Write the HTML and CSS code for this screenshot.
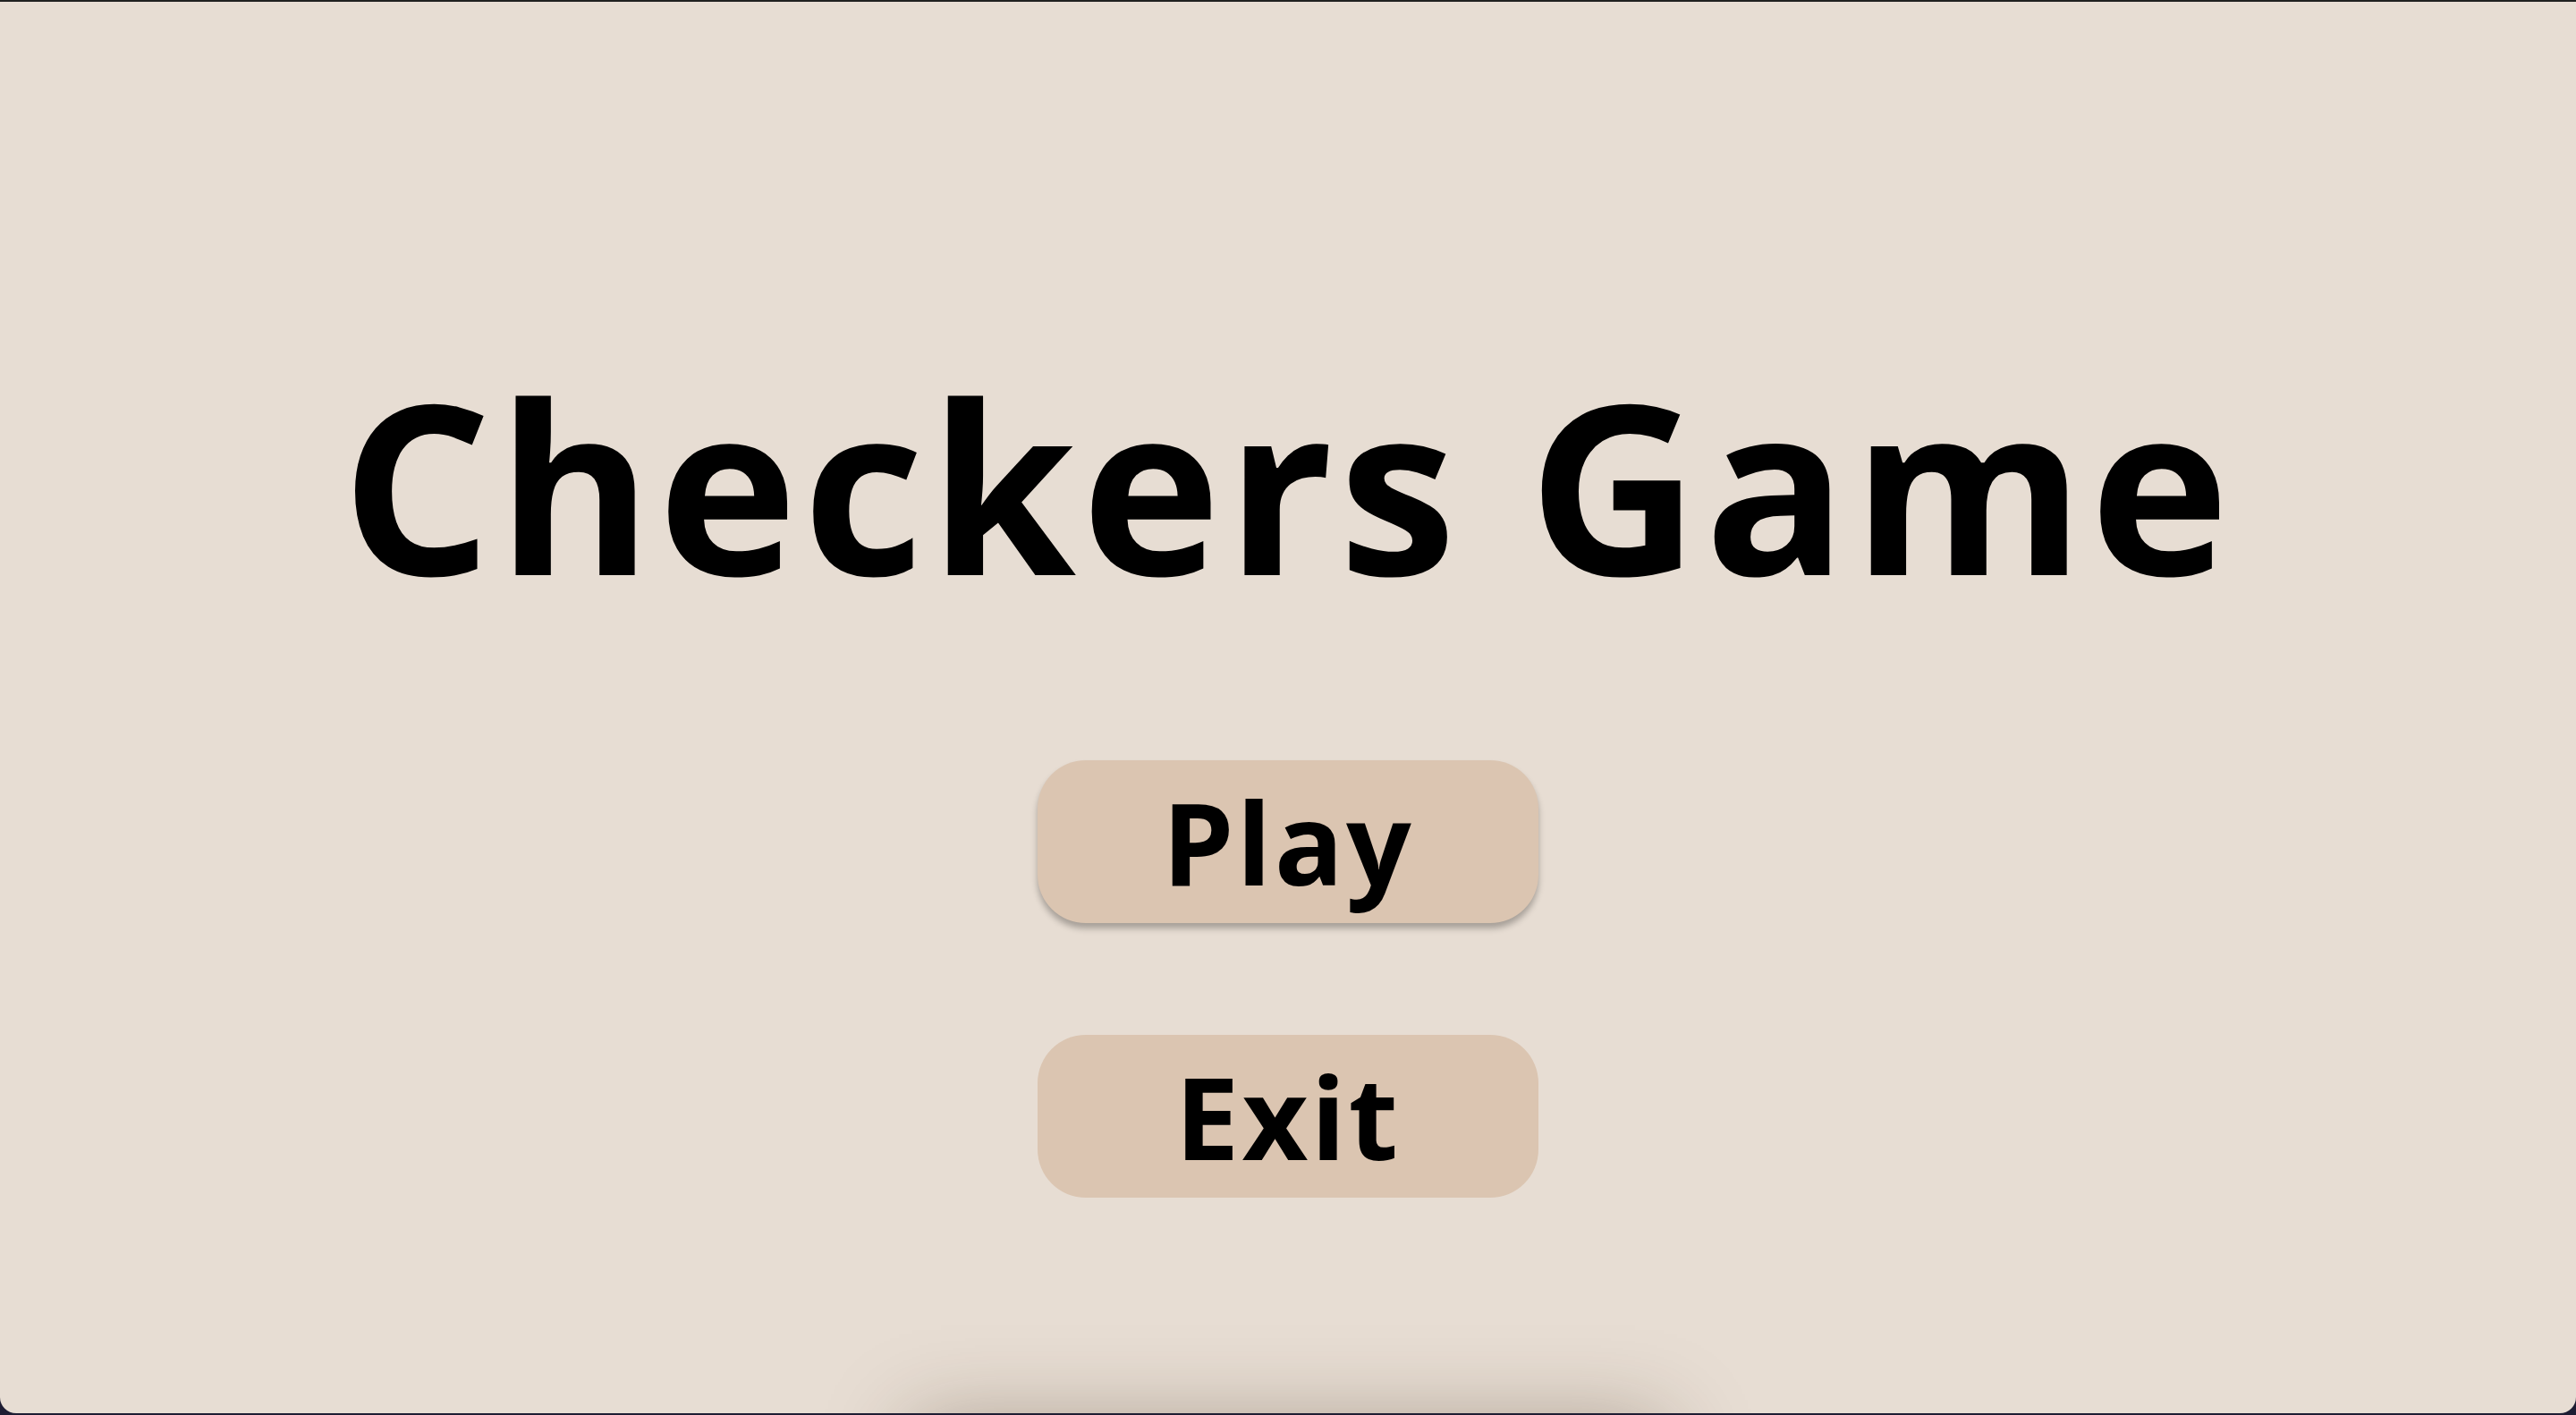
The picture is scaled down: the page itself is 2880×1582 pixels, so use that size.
FILE: index.html
```html
<!DOCTYPE html>
<html lang="en">
<head>
<meta charset="utf-8">
<title>Checkers Game</title>
<link rel="stylesheet" href="styles.css">
</head>
<body>
<main class="screen">
  <h1 class="title">Checkers Game</h1>
  <button class="btn btn-play">Play</button>
  <button class="btn btn-exit">Exit</button>
  <div class="board"></div>
</main>
</body>
</html>
```

FILE: styles.css
```css
html, body {
  margin: 0;
  padding: 0;
}
body {
  background: #1e1d33;
  border-top: 2px solid #202020;
  height: 1580px;
  overflow: hidden;
}
.screen {
  box-sizing: border-box;
  height: 1578px;
  background: #e7ddd3;
  border-radius: 0 0 18px 18px;
  overflow: hidden;
  display: flex;
  flex-direction: column;
  align-items: center;
  padding-top: 407px;
  font-family: "Open Sans", "DejaVu Sans", sans-serif;
}
.title {
  margin: 0;
  font-size: 264px;
  line-height: 1;
  font-weight: 700;
  letter-spacing: 6px;
  color: #000;
  white-space: nowrap;
}
.btn {
  flex-shrink: 0;
  width: 560px;
  height: 182px;
  border: none;
  border-radius: 54px;
  background: #dbc5b1;
  color: #000;
  font-family: "Open Sans", "DejaVu Sans", sans-serif;
  font-weight: 700;
  font-size: 128px;
  letter-spacing: 3px;
  line-height: 182px;
  padding: 0;
}
.btn-play {
  margin-top: 177px;
  box-shadow: 0 6px 7px rgba(0, 0, 0, 0.28);
}
.btn-exit {
  margin-top: 125px;
}
.board {
  flex-shrink: 0;
  width: 820px;
  height: 800px;
  margin-top: 261px;
  background: #e7ddd3;
  box-shadow: 0 0 90px 10px rgba(60, 40, 20, 0.35);
}
```
